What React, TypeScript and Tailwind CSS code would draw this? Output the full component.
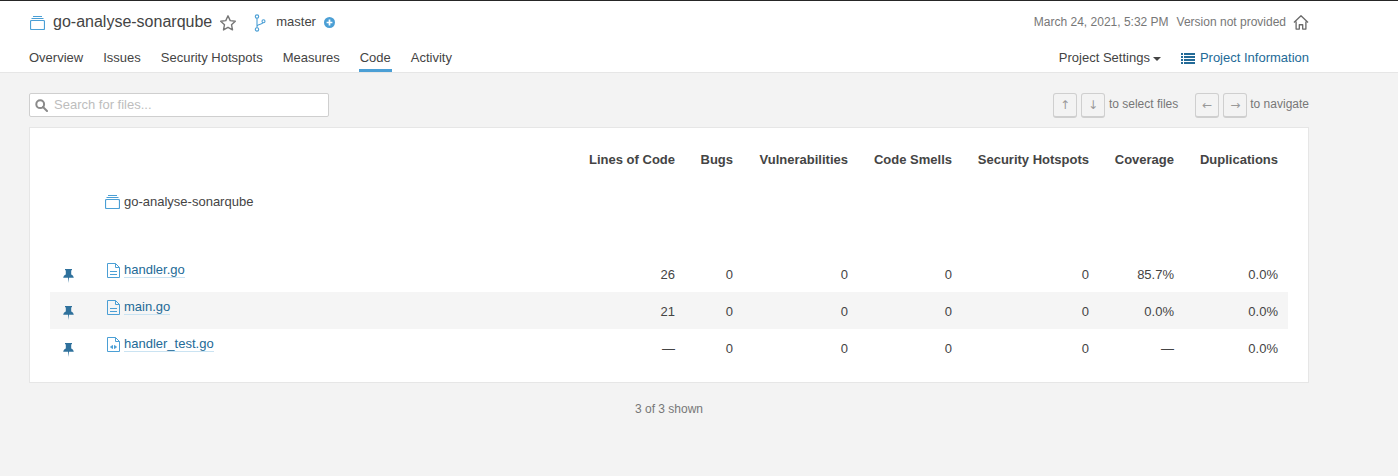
const font = "font-['Liberation_Sans',Arial,sans-serif]";

function QualifierIcon({ className = "" }: { className?: string }) {
  return (
    <svg className={className} width="15" height="14" viewBox="0 0 15 14" fill="none" stroke="#4b9fd5" strokeWidth="1">
      <rect x="0.5" y="4.5" width="14" height="9" rx="1" strokeWidth="1.2" />
      <path d="M1.500 2.500h12M3 0.500h9" />
    </svg>
  );
}

function Star() {
  return (
    <svg width="18" height="18" viewBox="0 0 18 18" fill="none" stroke="#777" strokeWidth="1.4">
      <path d="M9 1.800l2.200 4.800 5.100.6-3.800 3.500 1 5.200L9 13.300l-4.500 2.600 1-5.200L1.700 7.200l5.100-.6z" strokeLinejoin="round" />
    </svg>
  );
}

function Branch() {
  return (
    <svg width="12" height="18" viewBox="0 0 12 18" fill="none" stroke="#4b9fd5" strokeWidth="1.1">
      <circle cx="3" cy="2.600" r="1.700" />
      <circle cx="3" cy="15.400" r="1.700" />
      <circle cx="9.500" cy="7.200" r="1.500" />
      <path d="M3 4.300v9.400M3 12.500c0-2.600 5.600-2 6-3.800" />
    </svg>
  );
}

function PlusCircle() {
  return (
    <svg width="11" height="11" viewBox="0 0 11 11">
      <circle cx="5.500" cy="5.500" r="5.500" fill="#4b9fd5" />
      <path d="M5.500 2.600v5.800M2.600 5.500h5.800" stroke="#fff" strokeWidth="1.700" />
    </svg>
  );
}

function Home() {
  return (
    <svg width="16" height="17" viewBox="0 0 17 17" fill="none" stroke="#6a6a6a" strokeWidth="1.4">
      <path d="M1 8.600L8.500 1.400 16 8.600M3.300 7.400v8.100h3.400v-4.600h3.600v4.600h3.400V7.400" strokeLinejoin="round" />
    </svg>
  );
}

function ListIcon() {
  return (
    <svg width="14" height="11" viewBox="0 0 14 11" fill="#236a97">
      <path d="M0 0h2v2H0zM3 0h11v2H3zM0 3h2v2H0zM3 3h11v2H3zM0 6h2v2H0zM3 6h11v2H3zM0 9h2v2H0zM3 9h11v2H3z" />
    </svg>
  );
}

function SearchIcon() {
  return (
    <svg width="13" height="13" viewBox="0 0 13 13" fill="none" stroke="#8a8a8a" strokeWidth="2">
      <circle cx="5.200" cy="5.200" r="3.900" />
      <path d="M8 8l4 4" strokeLinecap="round" />
    </svg>
  );
}

function Pin() {
  return (
    <svg width="11" height="14" viewBox="0 0 11 14" fill="#2f719c">
      <path d="M2 0h7v1.200H8.200v4.400c1.400.7 2.400 1.700 2.600 3.200H6L5.500 14 5 8.800H.2C.4 7.300 1.400 6.300 2.800 5.600V1.200H2z" />
    </svg>
  );
}

function FileIcon({ test = false }: { test?: boolean }) {
  return (
    <svg width="13" height="15" viewBox="0 0 13 15" fill="none" stroke="#4b9fd5" strokeWidth="1">
      <path d="M0.500 0.500h8l4 4v10h-12zM8.500 0.500v4h4" strokeLinejoin="round" />
      {test ? (
        <path d="M5.500 8.500l-2 1.500 2 1.500zM7.500 8.500l2 1.500-2 1.500z" fill="#4b9fd5" />
      ) : (
        <path d="M3 8.500h7M3 11.500h7" />
      )}
    </svg>
  );
}

function Key({ children }: { children: string }) {
  return (
    <span className="flex h-[25px] w-6 items-center justify-center rounded-[3px] border border-[#cfcfcf] border-b-2 bg-[#f3f3f3] font-['DejaVu_Sans',sans-serif] text-xs text-[#999]">
      {children}
    </span>
  );
}

const GRID = "grid grid-cols-[54px_1fr_96px_58px_115px_104px_137px_85px_104px] pr-[10px] items-center";

const files = [
  { name: "handler.go", vals: ["26", "0", "0", "0", "0", "85.7%", "0.0%"] },
  { name: "main.go", vals: ["21", "0", "0", "0", "0", "0.0%", "0.0%"], shade: true },
  { name: "handler_test.go", vals: ["—", "0", "0", "0", "0", "—", "0.0%"], test: true },
];

const headers = ["Lines of Code", "Bugs", "Vulnerabilities", "Code Smells", "Security Hotspots", "Coverage", "Duplications"];

export default function App() {
  return (
    <div className={`${font} h-[476px] overflow-hidden bg-[#f3f3f3] text-[13px] text-[#444]`}>
      <header className="h-[73px] border-t border-t-[#262626] border-b border-b-[#e6e6e6] bg-white pl-[29px] pr-[89px]">
        <div className="flex h-[43px] items-center justify-between">
          <div className="flex items-center">
            <QualifierIcon className="ml-[1px]" />
            <span className="ml-[8px] -mt-[2px] text-base text-[#444]">go-analyse-sonarqube</span>
            <span className="ml-[7px] flex"><Star /></span>
            <span className="ml-[17px] flex"><Branch /></span>
            <span className="ml-[10px] -mt-[1px] text-[#444]">master</span>
            <span className="ml-[8px] flex"><PlusCircle /></span>
          </div>
          <div className="flex items-center text-xs text-[#777]">
            <span className="-mt-[2px]">March 24, 2021, 5:32 PM</span>
            <span className="ml-2 -mt-[2px]">Version not provided</span>
            <span className="ml-[7px] flex"><Home /></span>
          </div>
        </div>
        <div className="flex h-[28px] items-start justify-between">
          <nav className="flex gap-5 text-[13px] leading-[28px] text-[#444]">
            {["Overview", "Issues", "Security Hotspots", "Measures", "Code", "Activity"].map((t) => (
              <span key={t} className={t === "Code" ? "h-[28px] border-b-[3px] border-[#4b9fd5] px-[1px] -mx-[1px]" : "h-[28px]"}>
                {t}
              </span>
            ))}
          </nav>
          <div className="flex items-center leading-[28px]">
            <span className="text-[#444]">Project Settings</span>
            <span className="ml-[3px] mt-[1px] h-0 w-0 border-x-[4px] border-t-[4px] border-x-transparent border-t-[#444]" />
            <span className="ml-[20px] flex"><ListIcon /></span>
            <span className="ml-[5px] text-[#236a97]">Project Information</span>
          </div>
        </div>
      </header>

      <main className="w-[1280px] ml-[29px]">
        <div className="flex h-[54px] items-center justify-between pt-[10px]">
          <div className="flex h-6 w-[300px] items-center rounded-[2px] border border-[#cfcfcf] bg-white pl-[5px]">
            <SearchIcon />
            <span className="ml-[6px] text-[#bdbdbd]">Search for files...</span>
          </div>
          <div className="flex items-center text-xs text-[#777]">
            <span className="flex gap-1"><Key>↑</Key><Key>↓</Key></span>
            <span className="ml-1 -mt-[2px]">to select files</span>
            <span className="ml-[17px] flex gap-1"><Key>←</Key><Key>→</Key></span>
            <span className="ml-[3px] -mt-[2px]">to navigate</span>
          </div>
        </div>

        <section className="h-[256px] border border-[#e6e6e6] bg-white px-5">
          <div className={`${GRID} h-[63px] pt-[1px] font-bold text-[#444]`}>
            <span />
            <span />
            {headers.map((h) => (
              <span key={h} className="whitespace-nowrap text-right">{h}</span>
            ))}
          </div>
          <div className="flex h-[21px] items-center pl-[55px]">
            <QualifierIcon />
            <span className="ml-[4px] text-[#444]">go-analyse-sonarqube</span>
          </div>
          <div className="h-[43px]" />
          {files.map((f) => (
            <div key={f.name} className={`${GRID} h-[37px] ${f.shade ? "bg-[#f5f5f5]" : ""}`}>
              <span className="flex justify-center pl-[3px] pt-[5px] pr-[20px]"><Pin /></span>
              <span className="flex items-center pb-[7px]">
                <span className="ml-[3px] flex"><FileIcon test={f.test} /></span>
                <span className="ml-[4px] border-b border-[#cae3f2] leading-[15px] text-[#236a97]">{f.name}</span>
              </span>
              {f.vals.map((v, i) => (
                <span key={i} className="pt-[2px] text-right">{v}</span>
              ))}
            </div>
          ))}
        </section>

        <div className="pt-[18px] text-center text-xs text-[#777]">3 of 3 shown</div>
      </main>
    </div>
  );
}
